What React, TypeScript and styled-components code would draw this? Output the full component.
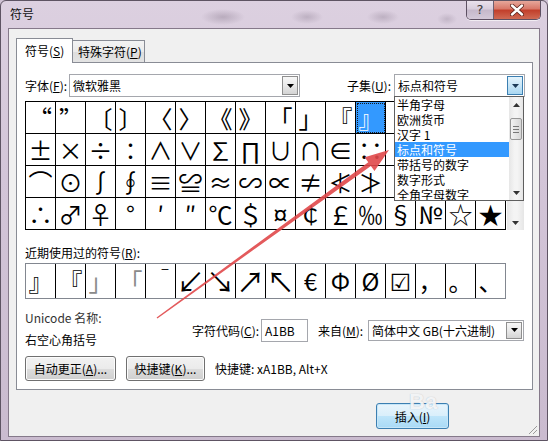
import React from 'react';
import styled, { createGlobalStyle } from 'styled-components';

const GlobalStyle = createGlobalStyle`
  html, body { margin: 0; padding: 0; }
  body {
    width: 548px; height: 441px; overflow: hidden;
    font-family: "Noto Sans CJK SC", "Noto Sans", sans-serif;
    font-size: 12px; color: #000; background: #cfc2d4;
  }
  * { box-sizing: border-box; }
`;

const Window = styled.div`
  position: relative;
  width: 548px;
  height: 441px;
  display: flex;
  flex-direction: column;
  border: 1px solid #5e5463;
  border-radius: 6px 6px 0 0;
  overflow: hidden;
  background:
    radial-gradient(ellipse 22px 8px at 222px 16px, rgba(120,105,125,0.35), transparent),
    radial-gradient(ellipse 16px 7px at 306px 16px, rgba(120,105,125,0.3), transparent),
    radial-gradient(ellipse 16px 7px at 382px 16px, rgba(120,105,125,0.3), transparent),
    radial-gradient(ellipse 10px 6px at 446px 18px, rgba(120,105,125,0.25), transparent),
    linear-gradient(180deg, #dcd0e0 0%, #d3c5d8 40%, #cabbcf 100%);
`;

const TitleBar = styled.div`
  flex: none;
  height: 27px;
  display: flex;
  align-items: flex-start;
  justify-content: space-between;
`;

const TitleText = styled.div`
  padding-left: 9px;
  line-height: 26px;
  font-size: 12px;
  color: #111;
`;

const CaptionGroup = styled.div`
  display: flex;
  margin-top: -1px;
  margin-right: 6px;
  border: 1px solid #5d5062;
  border-top: none;
  border-radius: 0 0 5px 5px;
  overflow: hidden;
  box-shadow: 0 1px 0 rgba(255,255,255,0.6);
`;

const CaptionButton = styled.div<{ $close?: boolean }>`
  width: ${p => (p.$close ? 47 : 26)}px;
  height: 19px;
  display: flex;
  align-items: center;
  justify-content: center;
  font-family: "DejaVu Sans", sans-serif;
  font-size: 13px;
  color: #3a3a3a;
  border-left: ${p => (p.$close ? '1px solid #6d5f70' : 'none')};
  background: ${p =>
    p.$close
      ? 'linear-gradient(180deg, #e8ada1 0%, #d8796a 45%, #c2402c 55%, #cf6a54 100%)'
      : 'linear-gradient(180deg, #ece4ee 0%, #d9cedd 45%, #c6b9cb 55%, #d4c9d8 100%)'};
`;

const Client = styled.div`
  position: relative;
  flex: none;
  height: 409px;
  margin: 0 7px;
  border: 1px solid #85798a;
  background: #f0f0f0;
  display: flex;
  flex-direction: column;
`;

const TabRow = styled.div`
  display: flex;
  align-items: flex-end;
  height: 25px;
  margin: 9px 0 -1px 7px;
  position: relative;
  z-index: 1;
`;

const Tab = styled.div<{ $active?: boolean }>`
  height: ${p => (p.$active ? 25 : 22)}px;
  margin-bottom: ${p => (p.$active ? 0 : 1)}px;
  margin-left: ${p => (p.$active ? 0 : -1)}px;
  padding: 0 ${p => (p.$active ? 8 : 5)}px;
  width: ${p => (p.$active ? 57 : 73)}px;
  border: 1px solid #898c95;
  border-bottom: none;
  display: flex;
  align-items: center;
  white-space: nowrap;
  font-size: 12px;
  background: ${p => (p.$active ? '#fff' : 'linear-gradient(180deg, #f3f3f3 0%, #ebebeb 50%, #dddddd 51%, #e3e3e3 100%)')};
  padding-bottom: ${p => (p.$active ? 1 : 0)}px;
`;

const U = styled.span`
  text-decoration: underline;
`;

const Panel = styled.div`
  position: relative;
  height: 328px;
  margin: 0 6px 0 7px;
  border: 1px solid #898c95;
  background: #fff;
  padding: 11px 7px 0 8px;
  display: flex;
  flex-direction: column;
`;

const FontRow = styled.div`
  display: flex;
  align-items: center;
  height: 23px;
`;

const Label = styled.div<{ $w?: number; $ml?: number }>`
  ${p => (p.$w ? `width: ${p.$w}px;` : '')}
  margin-left: ${p => p.$ml ?? 0}px;
  flex: none;
  white-space: nowrap;
  font-size: 12px;
  color: #000;
`;

const Spacer = styled.div`
  flex: 1;
`;

const Combo = styled.div<{ $w: number; $h?: number; $ml?: number }>`
  position: relative;
  flex: none;
  width: ${p => p.$w}px;
  height: ${p => p.$h ?? 23}px;
  margin-left: ${p => p.$ml ?? 0}px;
  border: 1px solid #a5a7ad;
  background: #fff;
  display: flex;
  align-items: center;
  padding: 1px;
`;

const ComboText = styled.div`
  flex: 1;
  padding-left: 2px;
  font-size: 12px;
  white-space: nowrap;
  overflow: hidden;
`;

const ComboButton = styled.div<{ $active?: boolean }>`
  width: 16px;
  height: 100%;
  border: 1px solid ${p => (p.$active ? '#3c7fb1' : '#8f8f8f')};
  background: ${p =>
    p.$active
      ? 'linear-gradient(180deg, #e5f4fc 0%, #c9e6f7 50%, #a9d7f1 100%)'
      : 'linear-gradient(180deg, #f7f7f7 0%, #e9e9e9 50%, #d4d4d4 100%)'};
  display: flex;
  align-items: center;
  justify-content: center;
`;

const DropList = styled.div`
  position: absolute;
  left: -1px;
  top: 21px;
  width: 130px;
  height: 105px;
  border: 1px solid #5f5f5f;
  background: #fff;
  display: flex;
  z-index: 5;
`;

const DropItems = styled.div`
  flex: 1;
  overflow: hidden;
`;

const DropItem = styled.div<{ $selected?: boolean }>`
  height: 15px;
  line-height: 15px;
  padding-left: 2px;
  font-size: 12px;
  white-space: nowrap;
  background: ${p => (p.$selected ? '#3399ff' : 'transparent')};
  color: ${p => (p.$selected ? '#fff' : '#000')};
`;

const ScrollTrack = styled.div<{ $w: number; $h?: number }>`
  flex: none;
  width: ${p => p.$w}px;
  ${p => (p.$h ? `height: ${p.$h}px;` : '')}
  background: linear-gradient(90deg, #e6e6e6 0%, #f4f4f4 40%, #f4f4f4 60%, #e6e6e6 100%);
  display: flex;
  flex-direction: column;
  align-items: stretch;
`;

const ScrollArrow = styled.div`
  height: 15px;
  flex: none;
  display: flex;
  align-items: center;
  justify-content: center;
`;

const ScrollGap = styled.div<{ $h?: number }>`
  ${p => (p.$h !== undefined ? `height: ${p.$h}px; flex: none;` : 'flex: 1;')}
`;

const ScrollThumb = styled.div<{ $h: number }>`
  height: ${p => p.$h}px;
  margin: 0 1px;
  border: 1px solid #979797;
  border-radius: 2px;
  background: linear-gradient(90deg, #f2f2f2 0%, #e4e4e4 50%, #d6d6d6 100%);
  display: flex;
  flex-direction: column;
  align-items: center;
  justify-content: center;
  gap: 2px;
`;

const Grip = styled.div`
  width: 6px;
  height: 1px;
  background: #777;
`;

const GridArea = styled.div`
  display: flex;
  gap: 1px;
  margin-top: 4px;
`;

const SymbolGrid = styled.div`
  display: grid;
  grid-template-columns: repeat(16, 30px);
  grid-auto-rows: 32px;
  border-top: 1px solid #000;
  border-left: 1px solid #000;
  flex: none;
`;

const Cell = styled.div<{ $selected?: boolean; $align?: 'start' | 'end' | 'center'; $size?: number }>`
  position: relative;
  border-right: 1px solid #000;
  border-bottom: 1px solid #000;
  display: flex;
  align-items: center;
  justify-content: ${p => (p.$align === 'start' ? 'flex-start' : p.$align === 'end' ? 'flex-end' : 'center')};
  padding: 0 ${p => (p.$align && p.$align !== 'center' ? 3 : 0)}px;
  font-family: "Noto Sans CJK SC", "DejaVu Sans", sans-serif;
  font-size: ${p => p.$size ?? 24}px;
  line-height: 1;
  overflow: visible;
  white-space: nowrap;
  background: ${p => (p.$selected ? '#3399ff' : 'transparent')};
  color: ${p => (p.$selected ? '#fff' : '#000')};
  outline: ${p => (p.$selected ? '1px dotted #1a1a1a' : 'none')};
  outline-offset: -2px;
`;

const Glyph = styled.span<{ $covered?: boolean }>`
  visibility: ${p => (p.$covered ? 'hidden' : 'visible')};
`;

const SectionLabel = styled.div`
  margin-top: 15px;
  line-height: 16px;
  font-size: 12px;
`;

const RecentGrid = styled.div`
  margin-top: 2px;
  display: grid;
  grid-template-columns: repeat(16, 30px);
  grid-auto-rows: 34px;
  width: 481px;
  border-top: 1px solid #828790;
  border-bottom: 1px solid #828790;
  border-left: 1px solid #828790;
`;

const RecentCell = styled.div<{ $align?: 'start' | 'end' | 'center'; $valign?: 'top' | 'center'; $size?: number; $color?: string; $last?: boolean }>`
  border-right: 1px solid ${p => (p.$last ? '#828790' : '#000')};
  display: flex;
  align-items: ${p => (p.$valign === 'top' ? 'flex-start' : 'center')};
  justify-content: ${p => (p.$align === 'start' ? 'flex-start' : p.$align === 'end' ? 'flex-end' : 'center')};
  padding: ${p => (p.$valign === 'top' ? '1px 1px 0 1px' : '0')};
  font-family: "Noto Sans CJK SC", "DejaVu Sans", sans-serif;
  font-size: ${p => p.$size ?? 24}px;
  line-height: 1;
  white-space: nowrap;
  color: ${p => p.$color ?? '#000'};
`;

const InfoSection = styled.div`
  margin-top: 8px;
  display: flex;
  align-items: center;
`;

const InfoLeft = styled.div`
  width: 167px;
  flex: none;
  display: flex;
  flex-direction: column;
`;

const InfoLine = styled.div<{ $muted?: boolean }>`
  height: 22px;
  line-height: 22px;
  font-size: 12px;
  color: ${p => (p.$muted ? '#333' : '#000')};
  white-space: nowrap;
`;

const InfoRight = styled.div`
  display: flex;
  align-items: center;
  padding-top: 2px;
`;

const TextBox = styled.div`
  width: 47px;
  height: 23px;
  margin-left: 3px;
  border: 1px solid #a5a7ad;
  padding-left: 3px;
  line-height: 21px;
  font-size: 12px;
  flex: none;
`;

const ButtonRow = styled.div`
  margin-top: 5px;
  display: flex;
  align-items: center;
  gap: 10px;
`;

const Button = styled.div<{ $w: number; $default?: boolean; $h?: number }>`
  width: ${p => p.$w}px;
  height: ${p => p.$h ?? 25}px;
  flex: none;
  border: 1px solid ${p => (p.$default ? '#3c7fb1' : '#707070')};
  border-radius: 3px;
  display: flex;
  align-items: center;
  justify-content: center;
  font-size: 12px;
  white-space: nowrap;
  box-shadow: inset 0 0 0 1px ${p => (p.$default ? '#c7e6f8' : '#fcfcfc')};
  background: ${p =>
    p.$default
      ? 'linear-gradient(180deg, #e9f5fc 0%, #d9effb 50%, #bee5fa 51%, #a9daf6 100%)'
      : 'linear-gradient(180deg, #f2f2f2 0%, #ebebeb 50%, #dddddd 51%, #cfcfcf 100%)'};
`;

const HintText = styled.div`
  font-size: 12px;
  white-space: nowrap;
`;

const BottomBar = styled.div`
  display: flex;
  justify-content: flex-end;
  padding: 13px 90px 0 0;
`;

const ResizeGrip = styled.svg`
  position: absolute;
  right: 1px;
  bottom: 1px;
`;

const Watermark = styled.div`
  position: absolute;
  left: 408px;
  top: 388px;
  font-family: "Liberation Sans", sans-serif;
  font-size: 22px;
  font-weight: bold;
  color: rgba(255, 255, 255, 0.85);
  text-shadow: 0 0 1px rgba(120, 140, 160, 0.6);
  pointer-events: none;
  z-index: 9;
`;

const Overlay = styled.svg`
  position: absolute;
  left: -1px;
  top: -1px;
  pointer-events: none;
  z-index: 10;
`;

const Tri = ({ up = false, color = '#000' }: { up?: boolean; color?: string }) => (
  <svg width="7" height="4" viewBox="0 0 7 4">
    <path d={up ? 'M0 4h7L3.5 0z' : 'M0 0h7L3.5 4z'} fill={color} />
  </svg>
);

type Sym = { c: string; a?: 'start' | 'end' | 'center'; s?: number };

const rows: Sym[][] = [
  [{ c: '“', a: 'end' }, { c: '”', a: 'start' }, { c: '〔' }, { c: '〕' }, { c: '〈' }, { c: '〉' }, { c: '《' }, { c: '》' }, { c: '「' }, { c: '」' }, { c: '『' }, { c: '』' }, { c: '〖' }, { c: '〗' }, { c: '【' }, { c: '】' }],
  '±×÷∶∧∨∑∏∪∩∈∷√⊥∥∠'.split('').map(c => ({ c })),
  '⌒⊙∫∮≡≌≈∽∝≠≮≯≤≥∞∵'.split('').map(c => ({ c })),
  '∴♂♀°′″℃＄¤￠￡‰§№☆★'.split('').map(c => ({ c })),
];

type Rec = { c: string; a?: 'start' | 'end' | 'center'; v?: 'top' | 'center'; s?: number; col?: string };
const recent: Rec[] = [
  { c: '』' },
  { c: '『' },
  { c: '」', col: '#8a8a8a' },
  { c: '「', col: '#8a8a8a' },
  { c: 'ˉ', a: 'end', v: 'top', s: 18 },
  { c: '↙', s: 28 },
  { c: '↘', s: 28 },
  { c: '↗', s: 28 },
  { c: '↖', s: 28 },
  { c: '€' },
  { c: 'Φ' },
  { c: 'Ø' },
  { c: '☑' },
  { c: '，' },
  { c: '。' },
  { c: '、' },
];

const subsets = ['半角字母', '欧洲货币', '汉字 1', '标点和符号', '带括号的数字', '数字形式', '全角字母数字'];

// red arrow geometry
const T = [157, 318];
const P = [389, 150];
const len = Math.hypot(P[0] - T[0], P[1] - T[1]);
const ux = (P[0] - T[0]) / len;
const uy = (P[1] - T[1]) / len;
const nx = -uy;
const ny = ux;
const B = [P[0] - 24 * ux, P[1] - 24 * uy];
const pt = (x: number, y: number) => `${x.toFixed(1)},${y.toFixed(1)}`;
const arrowPoints = [
  pt(T[0] + 0.7 * nx, T[1] + 0.7 * ny),
  pt(B[0] + 2.2 * nx, B[1] + 2.2 * ny),
  pt(B[0] + 8.5 * nx, B[1] + 8.5 * ny),
  pt(P[0], P[1]),
  pt(B[0] - 8.5 * nx, B[1] - 8.5 * ny),
  pt(B[0] - 2.2 * nx, B[1] - 2.2 * ny),
  pt(T[0] - 0.7 * nx, T[1] - 0.7 * ny),
].join(' ');

export default function App() {
  return (
    <>
      <GlobalStyle />
      <Window>
        <TitleBar>
          <TitleText>符号</TitleText>
          <CaptionGroup>
            <CaptionButton>?</CaptionButton>
            <CaptionButton $close>
              <svg width="14" height="12" viewBox="0 0 14 12">
                <path d="M2 1.5L12 10.5M12 1.5L2 10.5" stroke="#5a2018" strokeWidth="4" strokeLinecap="round" />
                <path d="M2 1.5L12 10.5M12 1.5L2 10.5" stroke="#fff" strokeWidth="2.4" strokeLinecap="round" />
              </svg>
            </CaptionButton>
          </CaptionGroup>
        </TitleBar>
        <Client>
          <TabRow>
            <Tab $active>
              符号(<U>S</U>)
            </Tab>
            <Tab>
              特殊字符(<U>P</U>)
            </Tab>
          </TabRow>
          <Panel>
            <FontRow>
              <Label $w={44}>
                字体(<U>F</U>):
              </Label>
              <Combo $w={231}>
                <ComboText>微软雅黑</ComboText>
                <ComboButton>
                  <Tri />
                </ComboButton>
              </Combo>
              <Spacer />
              <Label>
                子集(<U>U</U>):
              </Label>
              <Combo $w={131} $ml={3}>
                <ComboText>标点和符号</ComboText>
                <ComboButton $active>
                  <Tri color="#1d3b57" />
                </ComboButton>
                <DropList>
                  <DropItems>
                    {subsets.map((s, i) => (
                      <DropItem key={s} $selected={i === 3}>
                        {s}
                      </DropItem>
                    ))}
                  </DropItems>
                  <ScrollTrack $w={14}>
                    <ScrollArrow>
                      <Tri up color="#333" />
                    </ScrollArrow>
                    <ScrollGap $h={6} />
                    <ScrollThumb $h={22}>
                      <Grip />
                      <Grip />
                      <Grip />
                    </ScrollThumb>
                    <ScrollGap />
                    <ScrollArrow>
                      <Tri color="#333" />
                    </ScrollArrow>
                  </ScrollTrack>
                </DropList>
              </Combo>
            </FontRow>

            <GridArea>
              <SymbolGrid>
                {rows.map((r, ri) =>
                  r.map((s, ci) => (
                    <Cell key={`${ri}-${ci}`} $align={s.a} $size={s.s} $selected={ri === 0 && ci === 11}>
                      <Glyph $covered={ri < 3 && ci >= 12}>{s.c}</Glyph>
                    </Cell>
                  ))
                )}
              </SymbolGrid>
              <ScrollTrack $w={17} $h={129}>
                <ScrollArrow>
                  <Tri up color="#333" />
                </ScrollArrow>
                <ScrollGap />
                <ScrollArrow>
                  <Tri color="#333" />
                </ScrollArrow>
              </ScrollTrack>
            </GridArea>

            <SectionLabel>
              近期使用过的符号(<U>R</U>):
            </SectionLabel>
            <RecentGrid>
              {recent.map((r, i) => (
                <RecentCell key={i} $align={r.a} $valign={r.v} $size={r.s} $color={r.col} $last={i === 15}>
                  {r.c}
                </RecentCell>
              ))}
            </RecentGrid>

            <InfoSection>
              <InfoLeft>
                <InfoLine $muted>Unicode 名称:</InfoLine>
                <InfoLine>右空心角括号</InfoLine>
              </InfoLeft>
              <InfoRight>
                <Label $w={66}>
                  字符代码(<U>C</U>):
                </Label>
                <TextBox>A1BB</TextBox>
                <Label $ml={10} $w={47}>
                  来自(<U>M</U>):
                </Label>
                <Combo $w={156} $h={21} $ml={3}>
                  <ComboText>简体中文 GB(十六进制)</ComboText>
                  <ComboButton>
                    <Tri />
                  </ComboButton>
                </Combo>
              </InfoRight>
            </InfoSection>

            <ButtonRow>
              <Button $w={91}>
                自动更正(<U>A</U>)...
              </Button>
              <Button $w={79}>
                快捷键(<U>K</U>)...
              </Button>
              <HintText>快捷键: xA1BB, Alt+X</HintText>
            </ButtonRow>
          </Panel>
          <BottomBar>
            <Button $w={73} $h={26} $default>
              插入(<U>I</U>)
            </Button>
          </BottomBar>
          <ResizeGrip width="12" height="12" viewBox="0 0 12 12">
            <path d="M11 3L3 11M11 7L7 11" stroke="#9a9a9a" strokeWidth="1" />
          </ResizeGrip>
        </Client>
        <Watermark>Ba</Watermark>
        <Overlay width="548" height="441" viewBox="0 0 548 441">
          <polygon points={arrowPoints} fill="#e0484a" fillOpacity="0.9" />
        </Overlay>
      </Window>
    </>
  );
}
